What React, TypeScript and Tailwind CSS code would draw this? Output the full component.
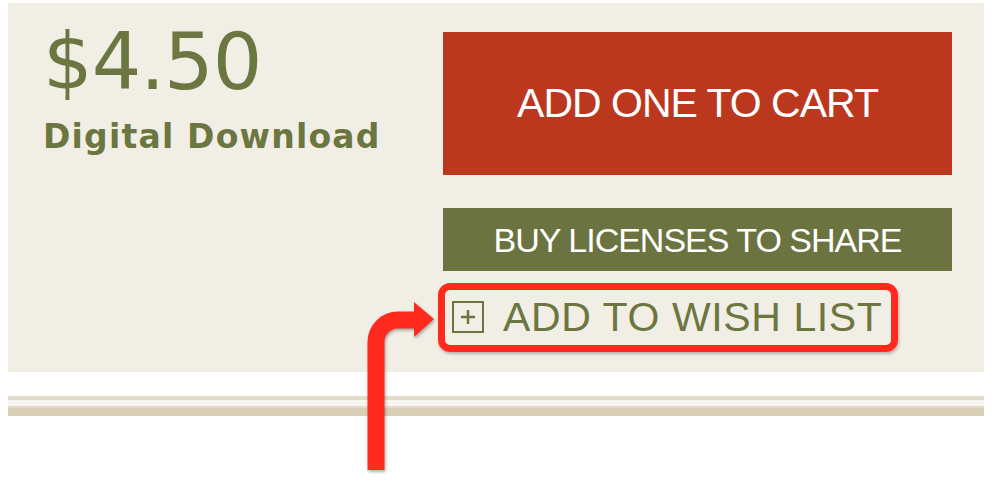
import React from "react";

export default function App() {
  return (
    <div className="relative w-[994px] h-[488px] bg-white overflow-hidden">
      <div className="ml-[8px] pt-[3px] w-[976px]">
        <div className="flex h-[369px] bg-[#f1eee6]">
          <div className="w-[435px] pl-[35px] pt-[20px]">
            <div className="text-[78px] leading-none tracking-[-1px] text-[#6b7640] font-['DejaVu_Sans',sans-serif]">
              $4.50
            </div>
            <div className="mt-[19px] text-[33px] leading-none font-bold tracking-[1.2px] text-[#6b7640] font-['DejaVu_Sans',sans-serif]">
              Digital Download
            </div>
          </div>
          <div className="w-[509px] pt-[29px] flex flex-col font-['Liberation_Sans',Arial,sans-serif]">
            <div className="h-[143px] bg-[#bb381f] flex items-center justify-center text-white text-[41px] leading-none tracking-[-1px]">
              ADD ONE TO CART
            </div>
            <div className="mt-[33px] h-[63px] bg-[#6b7340] flex items-center justify-center text-white text-[34px] leading-none tracking-[-1px]">
              BUY LICENSES TO SHARE
            </div>
            <div className="mt-[26px] ml-[9px] flex items-start gap-[19px]">
              <svg width="32" height="32" viewBox="0 0 32 32" className="mt-[4px] shrink-0">
                <rect x="1" y="1" width="30" height="30" fill="none" stroke="#6b7640" strokeWidth="2" />
                <path d="M9 16H23M16 9V23" stroke="#6b7640" strokeWidth="2.5" />
              </svg>
              <div className="text-[41px] leading-none tracking-[0.6px] text-[#6b7640]">ADD TO WISH LIST</div>
            </div>
          </div>
        </div>
        <div className="mt-[24px] h-[4px] bg-[#e2dccb]" />
        <div className="h-[6px] bg-[#f8f6f1]" />
        <div className="h-[10px] bg-[#d8cfb6] border-t-[2px] border-[#e3dccb]" />
      </div>

      {/* annotation: highlight box */}
      <div className="absolute left-[438px] top-[283px] w-[460px] h-[69px] border-[7px] border-[#ff2a1e] rounded-[12px] shadow-[1px_2px_3px_rgba(0,0,0,0.25)]" />

      {/* annotation: arrow */}
      <svg
        className="absolute left-0 top-0"
        width="994"
        height="488"
        viewBox="0 0 994 488"
        style={{ filter: "drop-shadow(1px 2px 1.5px rgba(0,0,0,0.3))" }}
      >
        <path d="M376 470 V342 A22 22 0 0 1 398 320 H418" fill="none" stroke="#ff2a1e" strokeWidth="17" />
        <polygon points="414,302 434,319 414,337" fill="#ff2a1e" />
      </svg>
    </div>
  );
}
